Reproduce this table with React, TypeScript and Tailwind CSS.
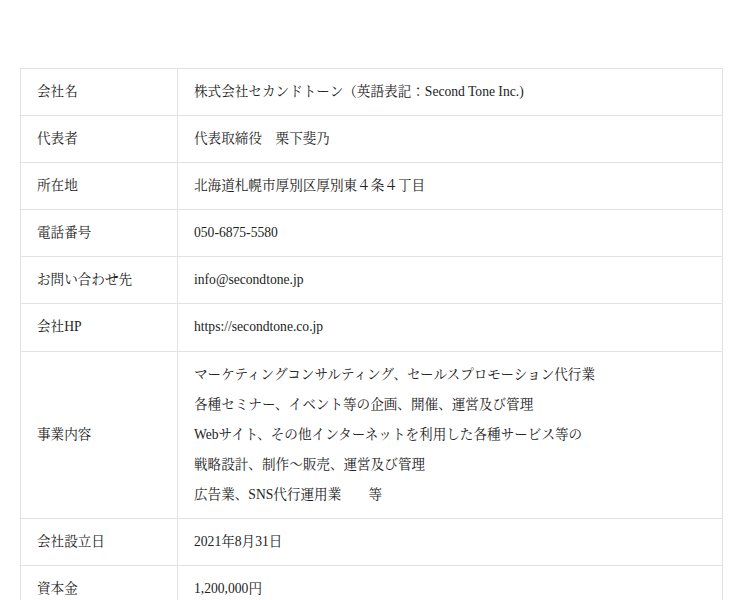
const rows: { label: string; lines: string[] }[] = [
  { label: "会社名", lines: ["株式会社セカンドトーン（英語表記：Second Tone Inc.)"] },
  { label: "代表者", lines: ["代表取締役　栗下斐乃"] },
  { label: "所在地", lines: ["北海道札幌市厚別区厚別東４条４丁目"] },
  { label: "電話番号", lines: ["050-6875-5580"] },
  { label: "お問い合わせ先", lines: ["info@secondtone.jp"] },
  { label: "会社HP", lines: ["https://secondtone.co.jp"] },
  {
    label: "事業内容",
    lines: [
      "マーケティングコンサルティング、セールスプロモーション代行業",
      "各種セミナー、イベント等の企画、開催、運営及び管理",
      "Webサイト、その他インターネットを利用した各種サービス等の",
      "戦略設計、制作～販売、運営及び管理",
      "広告業、SNS代行運用業　　等",
    ],
  },
  { label: "会社設立日", lines: ["2021年8月31日"] },
  { label: "資本金", lines: ["1,200,000円"] },
];

export default function App() {
  return (
    <div
      className="min-h-screen bg-white pt-[68px] px-5 text-[13.6px] text-[#222]"
      style={{ fontFamily: '"Liberation Serif", "Noto Serif CJK JP", "Noto Sans CJK JP", serif' }}
    >
      <table className="w-[703px] border-collapse">
        <tbody>
          {rows.map((r) => (
            <tr key={r.label}>
              <th className="w-[157px] border border-[#e2e2e2] px-4 py-2 text-left align-middle font-normal leading-[30.1px]">
                {r.label}
              </th>
              <td className="border border-[#e2e2e2] px-4 py-2 align-middle leading-[30.1px]">
                {r.lines.map((l) => (
                  <div key={l}>{l}</div>
                ))}
              </td>
            </tr>
          ))}
        </tbody>
      </table>
    </div>
  );
}
